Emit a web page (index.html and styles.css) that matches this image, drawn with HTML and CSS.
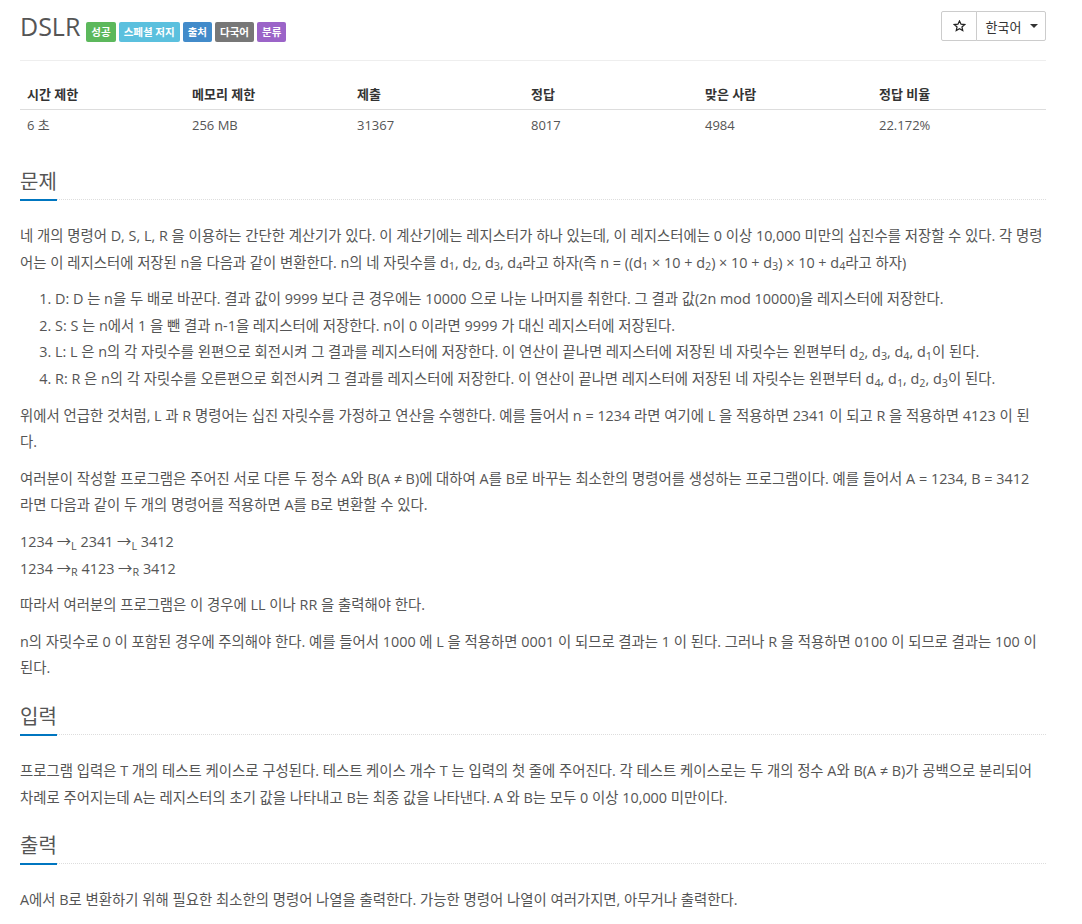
FILE: index.html
```html
<!DOCTYPE html>
<html lang="ko">
<head>
<meta charset="utf-8">
<title>DSLR</title>
<link rel="stylesheet" href="styles.css">
</head>
<body>
<div class="page">
  <div class="page-header">
    <h1 class="title">
      <span class="title-text">DSLR</span>
      <span class="label label-success">성공</span>
      <span class="label label-info">스페셜 저지</span>
      <span class="label label-primary">출처</span>
      <span class="label label-default">다국어</span>
      <span class="label label-purple">분류</span>
    </h1>
    <div class="btn-group">
      <button class="btn btn-star" aria-label="star">
        <svg class="star-icon" width="13" height="12" viewBox="0 0 13 12"><path d="M6.5 0.9 L8.05 4.2 L11.7 4.55 L8.95 6.95 L9.75 10.55 L6.5 8.7 L3.25 10.55 L4.05 6.95 L1.3 4.55 L4.95 4.2 Z" fill="none" stroke="#222" stroke-width="1.2" stroke-linejoin="miter"/></svg>
      </button>
      <button class="btn btn-lang">한국어<span class="caret"></span></button>
    </div>
  </div>

  <table class="stats">
    <thead>
      <tr>
        <th class="c1">시간 제한</th>
        <th class="c2">메모리 제한</th>
        <th class="c3">제출</th>
        <th class="c4">정답</th>
        <th class="c5">맞은 사람</th>
        <th class="c6">정답 비율</th>
      </tr>
    </thead>
    <tbody>
      <tr>
        <td>6 초</td>
        <td>256 MB</td>
        <td>31367</td>
        <td>8017</td>
        <td>4984</td>
        <td>22.172%</td>
      </tr>
    </tbody>
  </table>

  <section class="section">
    <div class="headline"><h2>문제</h2></div>
    <div class="problem-text">
      <p>네 개의 명령어 D, S, L, R 을 이용하는 간단한 계산기가 있다. 이 계산기에는 레지스터가 하나 있는데, 이 레지스터에는 0 이상 10,000 미만의 십진수를 저장할 수 있다. 각 명령어는 이 레지스터에 저장된 n을 다음과 같이 변환한다. n의 네 자릿수를 d<sub>1</sub>, d<sub>2</sub>, d<sub>3</sub>, d<sub>4</sub>라고 하자(즉 n = ((d<sub>1</sub> × 10 + d<sub>2</sub>) × 10 + d<sub>3</sub>) × 10 + d<sub>4</sub>라고 하자)</p>
      <ol>
        <li>D: D 는 n을 두 배로 바꾼다. 결과 값이 9999 보다 큰 경우에는 10000 으로 나눈 나머지를 취한다. 그 결과 값(2n mod 10000)을 레지스터에 저장한다.</li>
        <li>S: S 는 n에서 1 을 뺀 결과 n-1을 레지스터에 저장한다. n이 0 이라면 9999 가 대신 레지스터에 저장된다.</li>
        <li>L: L 은 n의 각 자릿수를 왼편으로 회전시켜 그 결과를 레지스터에 저장한다. 이 연산이 끝나면 레지스터에 저장된 네 자릿수는 왼편부터 d<sub>2</sub>, d<sub>3</sub>, d<sub>4</sub>, d<sub>1</sub>이 된다.</li>
        <li>R: R 은 n의 각 자릿수를 오른편으로 회전시켜 그 결과를 레지스터에 저장한다. 이 연산이 끝나면 레지스터에 저장된 네 자릿수는 왼편부터 d<sub>4</sub>, d<sub>1</sub>, d<sub>2</sub>, d<sub>3</sub>이 된다.</li>
      </ol>
      <p>위에서 언급한 것처럼, L 과 R 명령어는 십진 자릿수를 가정하고 연산을 수행한다. 예를 들어서 n = 1234 라면 여기에 L 을 적용하면 2341 이 되고 R 을 적용하면 4123 이 된다.</p>
      <p>여러분이 작성할 프로그램은 주어진 서로 다른 두 정수 A와 B(A ≠ B)에 대하여 A를 B로 바꾸는 최소한의 명령어를 생성하는 프로그램이다. 예를 들어서 A = 1234, B = 3412 라면 다음과 같이 두 개의 명령어를 적용하면 A를 B로 변환할 수 있다.</p>
      <p>1234 →<sub>L</sub> 2341 →<sub>L</sub> 3412<br>1234 →<sub>R</sub> 4123 →<sub>R</sub> 3412</p>
      <p>따라서 여러분의 프로그램은 이 경우에 LL 이나 RR 을 출력해야 한다.</p>
      <p>n의 자릿수로 0 이 포함된 경우에 주의해야 한다. 예를 들어서 1000 에 L 을 적용하면 0001 이 되므로 결과는 1 이 된다. 그러나 R 을 적용하면 0100 이 되므로 결과는 100 이 된다.</p>
    </div>
  </section>

  <section class="section">
    <div class="headline"><h2>입력</h2></div>
    <div class="problem-text">
      <p>프로그램 입력은 T 개의 테스트 케이스로 구성된다. 테스트 케이스 개수 T 는 입력의 첫 줄에 주어진다. 각 테스트 케이스로는 두 개의 정수 A와 B(A ≠ B)가 공백으로 분리되어 차례로 주어지는데 A는 레지스터의 초기 값을 나타내고 B는 최종 값을 나타낸다. A 와 B는 모두 0 이상 10,000 미만이다.</p>
    </div>
  </section>

  <section class="section">
    <div class="headline"><h2>출력</h2></div>
    <div class="problem-text">
      <p>A에서 B로 변환하기 위해 필요한 최소한의 명령어 나열을 출력한다. 가능한 명령어 나열이 여러가지면, 아무거나 출력한다.</p>
    </div>
  </section>
</div>
</body>
</html>
```

FILE: styles.css
```css
* {
  box-sizing: border-box;
}

body {
  margin: 0;
  background: #fff;
  color: #555;
  font-family: "Open Sans", "Noto Sans CJK KR", sans-serif;
  font-size: 14px;
  line-height: 1.42857;
}

.page {
  width: 1026px;
  margin-left: 20px;
}

/* header */
.page-header {
  display: flex;
  justify-content: space-between;
  align-items: flex-start;
  padding-top: 11px;
  padding-bottom: 18px;
  border-bottom: 1px solid #eee;
}

.title {
  display: flex;
  align-items: baseline;
  gap: 3px;
  margin: 0;
  font-weight: 400;
}

.title-text {
  font-size: 25px;
  line-height: 30px;
  color: #555;
  margin-right: 3px;
}

.label {
  display: inline-block;
  font-size: 10.5px;
  font-weight: 700;
  line-height: 20px;
  padding: 0 5px;
  color: #fff;
  border-radius: 2px;
}

.label-success { background: #5cb85c; }
.label-info { background: #5bc0de; }
.label-primary { background: #428bca; }
.label-default { background: #777; }
.label-purple { background: #9b64c8; }

.btn-group {
  display: flex;
}

.btn {
  height: 30px;
  background: #fff;
  border: 1px solid #ccc;
  color: #333;
  font-family: "Open Sans", "Noto Sans CJK KR", sans-serif;
  font-size: 13px;
  padding: 0;
  display: flex;
  align-items: center;
  justify-content: center;
}

.btn + .btn {
  margin-left: -1px;
}

.btn-star {
  width: 36px;
  border-radius: 2px 0 0 2px;
}

.star-icon {
  display: block;
}

.btn-lang {
  width: 70px;
  border-radius: 0 2px 2px 0;
  padding-left: 2px;
}

.caret {
  display: inline-block;
  width: 0;
  height: 0;
  margin-left: 9px;
  border-top: 4px solid #333;
  border-left: 4px solid transparent;
  border-right: 4px solid transparent;
}

/* stats table */
.stats {
  width: 100%;
  border-collapse: collapse;
  margin: 18px 0 31px;
  font-size: 13px;
}

.stats th,
.stats td {
  padding: 5px 7px;
  line-height: 20px;
  text-align: left;
}

.stats th {
  font-weight: 700;
  color: #333;
  border-bottom: 1px solid #ddd;
}

.stats td {
  color: #555;
}

.c1, .c2 { width: 165px; }
.c3, .c4, .c5, .c6 { width: 174px; }

/* sections */
.headline {
  display: flex;
  margin: 24px 0 23px;
  border-bottom: 1px dotted #ddd;
}

.headline h2 {
  margin: 0 0 -2px;
  font-size: 20px;
  font-weight: 400;
  line-height: 22px;
  padding-bottom: 6px;
  border-bottom: 2px solid #0076c0;
  color: #555;
}

.problem-text {
  font-size: 14.4px;
  line-height: 26.6px;
}

.problem-text p {
  margin: 0 0 10px;
}

.problem-text ol {
  margin: 0 0 10px;
  padding-left: 35px;
}

sub {
  font-size: 75%;
  line-height: 0;
  position: relative;
  vertical-align: baseline;
  bottom: -0.25em;
}
```
